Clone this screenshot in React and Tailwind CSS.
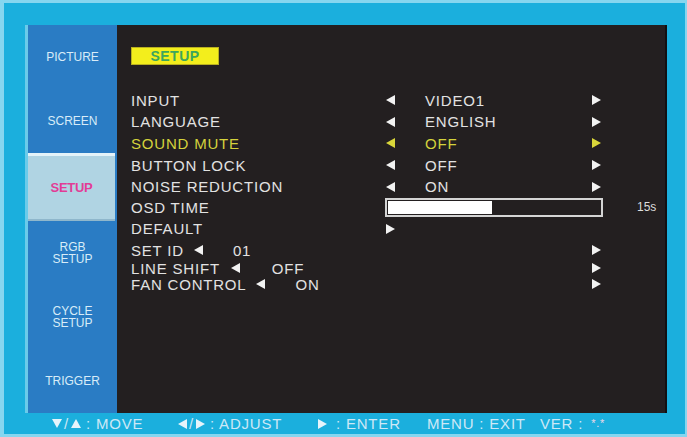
import React from 'react';

const Tri = ({ dir = 'left', color = '#f2f2f2', w = 9, h = 10 }) => {
    const pts = {
        left: `${w},0 ${w},${h} 0,${h / 2}`,
        right: `0,0 0,${h} ${w},${h / 2}`,
        up: `0,${h} ${w},${h} ${w / 2},0`,
        down: `0,0 ${w},0 ${w / 2},${h}`,
    }[dir];
    return (
        <svg width={w} height={h} viewBox={`0 0 ${w} ${h}`} className="inline-block shrink-0">
            <polygon points={pts} fill={color} />
        </svg>
    );
};

const sideItems = ['PICTURE', 'SCREEN', 'SETUP', 'RGB\nSETUP', 'CYCLE\nSETUP', 'TRIGGER'];

const rows = [
    { label: 'INPUT', value: 'VIDEO1', h: 'h-[22px]' },
    { label: 'LANGUAGE', value: 'ENGLISH', h: 'h-[21px]' },
    { label: 'SOUND MUTE', value: 'OFF', h: 'h-[22px]', active: true },
    { label: 'BUTTON LOCK', value: 'OFF', h: 'h-[22px]' },
    { label: 'NOISE REDUCTION', value: 'ON', h: 'h-[21px]' },
];

const App = () => {
    return (
        <div
            className="w-[687px] h-[437px] bg-[#1bafdd] border-t-[3px] border-l-[4px] border-b-[3px] border-r-2 border-[#86d6ef] pt-[22px] pl-[21px] pr-[18px] flex flex-col"
            style={{ fontFamily: '"Liberation Sans", Arial, sans-serif' }}
        >
            <div className="flex h-[388px]">
                {/* sidebar */}
                <div className="w-[92px] border-l-[3px] border-[#6acbea] bg-[#2a7cc4] flex flex-col">
                    {sideItems.map((item) =>
                        item === 'SETUP' ? (
                            <div key={item} className="flex-1 mr-[2px] bg-[#b0d4e3] border-t-[3px] border-[#e4f3f9] border-b-2 border-b-[#8fb7cc] flex items-center justify-center">
                                <span className="text-[13px] font-bold text-[#e23c96] tracking-[-0.3px]">SETUP</span>
                            </div>
                        ) : (
                            <div key={item} className="flex-1 flex items-center justify-center">
                                <span className="text-[12px] leading-[12px] text-[#d8ecf8] text-center whitespace-pre">{item}</span>
                            </div>
                        )
                    )}
                </div>

                {/* main panel */}
                <div className="flex-1 bg-[#231f20] border-r-2 border-[#121012] pl-[14px] pt-[22px] text-[15px] tracking-[0.8px] text-[#e2e2e2]">
                    <div className="w-[88px] h-[18px] bg-[#f3ee1c] border border-[#b9b020] flex items-center justify-center">
                        <span className="text-[14px] font-bold text-[#3ca55e] tracking-[0.5px] leading-none">SETUP</span>
                    </div>

                    <div className="mt-[24px] flex flex-col">
                        {rows.map((r) => {
                            const c = r.active ? '#d9d63a' : '#f2f2f2';
                            return (
                                <div key={r.label} className={`${r.h} flex items-center`}>
                                    <div className="w-[254px] leading-none" style={{ color: r.active ? '#d4d23c' : undefined }}>{r.label}</div>
                                    <div className="w-[40px] pl-[1px] flex items-center"><Tri dir="left" color={c} /></div>
                                    <div className="w-[167px] leading-none" style={{ color: r.active ? '#d4d23c' : undefined }}>{r.value}</div>
                                    <Tri dir="right" color={c} />
                                </div>
                            );
                        })}

                        <div className="h-[20px] flex items-center">
                            <div className="w-[254px] leading-none">OSD TIME</div>
                            <div className="w-[218px] h-[19px] border-2 border-[#d4d4d4] bg-[#231f20] p-[1px]">
                                <div className="w-[104px] h-full bg-white" />
                            </div>
                            <div className="ml-[34px] text-[12px] tracking-normal text-[#dddddd] leading-none">15s</div>
                        </div>

                        <div className="h-[23px] flex items-center">
                            <div className="w-[255px] leading-none">DEFAULT</div>
                            <Tri dir="right" />
                        </div>

                        <div className="h-[20px] flex items-center">
                            <div className="w-[461px] flex items-center leading-none">
                                <span>SET ID</span>
                                <span className="ml-[10px] flex"><Tri dir="left" /></span>
                                <span className="ml-[30px]">01</span>
                            </div>
                            <Tri dir="right" />
                        </div>

                        <div className="h-[16px] flex items-center">
                            <div className="w-[461px] flex items-center leading-none">
                                <span>LINE SHIFT</span>
                                <span className="ml-[11px] flex"><Tri dir="left" /></span>
                                <span className="ml-[32px]">OFF</span>
                            </div>
                            <Tri dir="right" />
                        </div>

                        <div className="h-[16px] flex items-center">
                            <div className="w-[461px] flex items-center leading-none">
                                <span>FAN CONTROL</span>
                                <span className="ml-[10px] flex"><Tri dir="left" /></span>
                                <span className="ml-[30px]">ON</span>
                            </div>
                            <Tri dir="right" />
                        </div>
                    </div>
                </div>
            </div>

            {/* footer */}
            <div className="flex-1 flex items-center pl-[27px] text-[15px] tracking-[0.8px] text-[#cde8f6] leading-none">
                <div className="w-[126px] flex items-center">
                    <Tri dir="down" color="#e6f4fb" w={10} h={9} />
                    <span className="mx-[2px]">/</span>
                    <Tri dir="up" color="#e6f4fb" w={10} h={9} />
                    <span className="ml-[5px]">: MOVE</span>
                </div>
                <div className="w-[140px] flex items-center">
                    <Tri dir="left" color="#e6f4fb" w={9} h={10} />
                    <span className="mx-[2px]">/</span>
                    <Tri dir="right" color="#e6f4fb" w={9} h={10} />
                    <span className="ml-[5px]">: ADJUST</span>
                </div>
                <div className="w-[109px] flex items-center">
                    <Tri dir="right" color="#e6f4fb" w={9} h={10} />
                    <span className="ml-[9px]">: ENTER</span>
                </div>
                <div className="w-[113px]">MENU : EXIT</div>
                <div className="flex items-center">
                    <span>VER :</span>
                    <span className="ml-[8px] text-[11px] text-[#f0d8e8]">*.*</span>
                </div>
            </div>
        </div>
    );
};

export default App;
